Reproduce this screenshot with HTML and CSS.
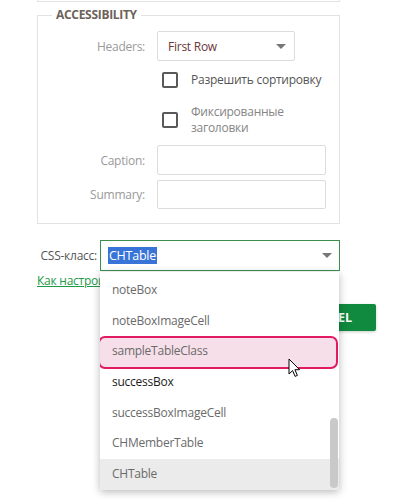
FILE: index.html
```html
<!DOCTYPE html>
<html lang="ru">
<head>
    <meta charset="UTF-8">
    <meta name="viewport" content="width=device-width, initial-scale=1.0">
    <title>Table Properties</title>
    <link rel="stylesheet" href="styles.css">
</head>
<body>
    <section class="dialog">
        <div class="prev-group"></div>

        <fieldset class="group">
            <legend class="group-title">Accessibility</legend>

            <label class="field-label">Headers:</label>
            <div class="select select-headers">
                <span>First Row</span>
                <span class="caret"></span>
            </div>

            <label class="check check-first">
                <span class="check-box"></span>
                <span class="check-text">Разрешить сортировку</span>
            </label>

            <label class="check check-second">
                <span class="check-box"></span>
                <span class="check-text light">Фиксированные<br>заголовки</span>
            </label>

            <label class="field-label caption-label">Caption:</label>
            <div class="input-field caption-field"></div>

            <label class="field-label summary-label">Summary:</label>
            <div class="input-field summary-field"></div>
        </fieldset>

        <div class="css-row">
            <label class="css-label">CSS-класс:</label>
            <div class="select select-css">
                <span class="selected-text">CHTable</span>
                <span class="caret"></span>
            </div>
        </div>

        <a class="help-link" href="#">Как настроить CSS-классы?</a>

        <div class="actions">
            <button type="button" class="btn">OK</button>
            <button type="button" class="btn">CANCEL</button>
        </div>
    </section>

    <ul class="dropdown">
        <li class="option">noteBox</li>
        <li class="option">noteBoxImageCell</li>
        <li class="option option-marked">sampleTableClass</li>
        <li class="option option-dark">successBox</li>
        <li class="option">successBoxImageCell</li>
        <li class="option">CHMemberTable</li>
        <li class="option option-current">CHTable</li>
        <span class="scroll-thumb"></span>
    </ul>

    <svg class="cursor" width="13" height="20" viewBox="0 0 13 20">
        <path d="M1 1 L1 16 L4.6 12.6 L7.1 18.4 L9.4 17.4 L6.9 11.7 L11.6 11.7 Z" fill="#fff" stroke="#000" stroke-width="1" stroke-linejoin="round"/>
    </svg>
</body>
</html>
```

FILE: styles.css
```css
html, body {
    margin: 0;
    overflow: hidden;
    background: #fff;
    font-family: "Open Sans", "Noto Sans", sans-serif;
    font-size: 12px;
    letter-spacing: -0.25px;
    color: #555;
}
.dialog {
    background: #fff;
    margin: 0 -40px;
    padding: 0 40px 14px;
    box-shadow: 0 12px 30px rgba(0, 0, 0, 0.35);
}
.prev-group {
    margin: 0 61px 0 37px;
    height: 1px;
    border: 1px solid #e2e2e2;
    border-top: none;
}
.group {
    margin: 6px 61px 0 37px;
    padding: 9px 0 14px 0;
    border: 1px solid #e2e2e2;
    display: grid;
    grid-template-columns: 107px 1fr;
    column-gap: 12px;
    align-items: center;
}
.group-title {
    margin-left: 14px;
    padding: 0 4px;
    font-size: 12px;
    line-height: 14px;
    font-weight: bold;
    letter-spacing: -0.3px;
    text-transform: uppercase;
    color: #6d6259;
}
.field-label {
    text-align: right;
    color: #9a9a9a;
}
.select {
    box-sizing: border-box;
    display: flex;
    align-items: center;
    justify-content: space-between;
    border: 1px solid #dcdcdc;
    border-radius: 2px;
    background: #fff;
}
.select-headers {
    width: 138px;
    height: 30px;
    padding: 0 8px 0 10px;
    color: #6b3838;
}
.caret {
    width: 0;
    height: 0;
    border-left: 5px solid transparent;
    border-right: 5px solid transparent;
    border-top: 5px solid #777;
}
.check {
    grid-column: 2;
    display: flex;
    align-items: center;
    gap: 13px;
    padding-left: 5px;
    white-space: nowrap;
}
.check-first {
    margin-top: 11px;
}
.check-second {
    margin-top: 16px;
}
.check-box {
    box-sizing: border-box;
    width: 16px;
    height: 16px;
    border: 2px solid #5a5a5a;
    border-radius: 2px;
    flex-shrink: 0;
}
.check-text {
    line-height: 16px;
    color: #555;
}
.check-text.light {
    color: #858585;
}
.input-field {
    box-sizing: border-box;
    width: 169px;
    height: 30px;
    border: 1px solid #dcdcdc;
    border-radius: 2px;
}
.caption-label,
.caption-field {
    margin-top: 9px;
}
.summary-label,
.summary-field {
    margin-top: 5px;
}
.summary-field {
    height: 29px;
}
.css-row {
    margin: 16px 61px 0 37px;
    display: flex;
    justify-content: flex-end;
    align-items: center;
}
.css-label {
    margin-right: 3px;
    white-space: nowrap;
    color: #555;
}
.select-css {
    width: 240px;
    height: 31px;
    padding: 0 7px 0 7px;
    border-color: #3d8f4f;
    border-radius: 0;
}
.selected-text {
    background: #3874d8;
    color: #fff;
    font-size: 12.5px;
    line-height: 17px;
    padding: 0 1px;
}
.help-link {
    display: block;
    margin: 1px 0 0 37px;
    line-height: 18px;
    width: max-content;
    color: #1e9a4a;
}
.actions {
    margin-top: 14px;
    margin-right: 25px;
    display: flex;
    justify-content: flex-end;
    gap: 10px;
}
.btn {
    height: 27px;
    padding: 0 24px;
    border: none;
    border-radius: 2px;
    background: #108a3f;
    color: #fff;
    font-family: "Open Sans", sans-serif;
    font-size: 12.5px;
    font-weight: bold;
    box-shadow: 0 1px 3px rgba(0, 0, 0, 0.2);
}
.dropdown {
    position: absolute;
    left: 100px;
    top: 272px;
    width: 239px;
    height: 218px;
    margin: 0;
    padding: 3px 0 0;
    box-sizing: border-box;
    list-style: none;
    overflow: hidden;
    background: #fff;
    box-shadow: 0 2px 8px rgba(0, 0, 0, 0.28);
}
.option {
    position: relative;
    height: 30.67px;
    line-height: 30.67px;
    padding-left: 12px;
    color: #6a6a6a;
}
.option-dark {
    color: #1c1c1c;
}
.option-current {
    background: #ebebeb;
}
.option-marked::before {
    content: "";
    position: absolute;
    left: -2px;
    right: 1px;
    top: 0;
    bottom: -2px;
    background: #f6dfe8;
    border: 2px solid #e21a62;
    border-radius: 7px;
    z-index: -1;
}
.option-marked {
    z-index: 0;
}
.scroll-thumb {
    position: absolute;
    right: 1px;
    top: 146px;
    width: 8px;
    height: 70px;
    border-radius: 4px;
    background: #c9c9c9;
}
.cursor {
    position: absolute;
    left: 288px;
    top: 358px;
}
```
